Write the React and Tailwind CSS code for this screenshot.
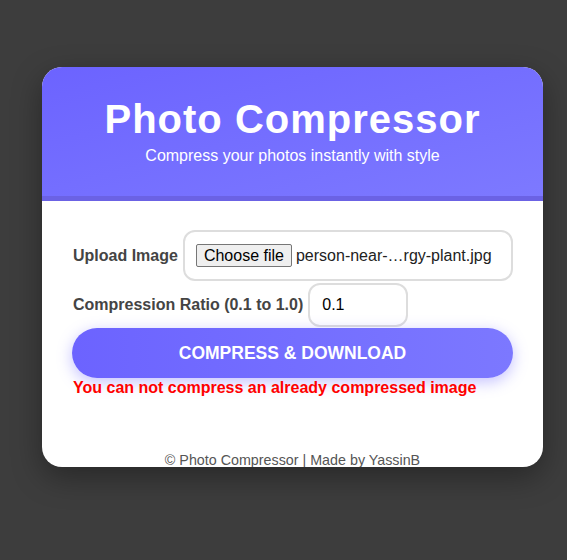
export default function App() {
  return (
    <div className="min-h-[560px] bg-[#3d3d3d] pt-[67px] pl-[42px] font-['Liberation_Sans',Arial,sans-serif]">
      <div className="w-[501px] h-[400px] bg-white rounded-[20px] overflow-hidden shadow-[0_10px_30px_rgba(0,0,0,0.35)] flex flex-col">
        <div className="bg-gradient-to-br from-[#6c63ff] to-[#7d79ff] border-b-[5px] border-[#6b62e4] pt-[29px] pb-[31px] text-center text-white">
          <h1 className="text-[40px] leading-[46px] font-bold tracking-[1px]">Photo Compressor</h1>
          <p className="mt-[5px] text-[16px] leading-[18px]">Compress your photos instantly with style</p>
        </div>

        <div className="px-[30px] pt-[29px] flex flex-col">
          <div className="flex items-center">
            <label className="shrink-0 whitespace-nowrap text-[16px] font-bold text-[#444] mr-[5px] ml-[1px]">Upload Image</label>
            <div className="w-[330px] h-[51px] border-2 border-[#ddd] rounded-xl flex items-center pl-[11px]">
              <span className="h-[23px] px-[7px] flex items-center bg-[#efefef] border border-[#767676] rounded-[2px] text-[16px] text-black">
                Choose file
              </span>
              <span className="ml-[4px] text-[16px] text-[#222]">person-near-…rgy-plant.jpg</span>
            </div>
          </div>

          <div className="flex items-center mt-[2px]">
            <label className="shrink-0 whitespace-nowrap text-[16px] font-bold text-[#444] mr-[5px] ml-[1px]">Compression Ratio (0.1 to 1.0)</label>
            <input
              type="number"
              defaultValue="0.1"
              className="w-[100px] h-[44px] border-2 border-[#ddd] rounded-xl px-[12px] text-[16px] text-black outline-none"
            />
          </div>

          <button className="mt-[1px] h-[50px] w-full rounded-full bg-gradient-to-r from-[#6c63ff] to-[#7c78ff] text-white text-[17.5px] font-bold shadow-[0_4px_15px_rgba(108,99,255,0.4)]">
            COMPRESS &amp; DOWNLOAD
          </button>

          <p className="mt-[1px] text-[16px] leading-[18px] font-bold text-[#ff0000] ml-[1px]">
            You can not compress an already compressed image
          </p>
        </div>

        <p className="mt-[55px] text-center text-[14.3px] leading-[16px] text-[#555]">
          © Photo Compressor | Made by YassinB
        </p>
      </div>
    </div>
  );
}
